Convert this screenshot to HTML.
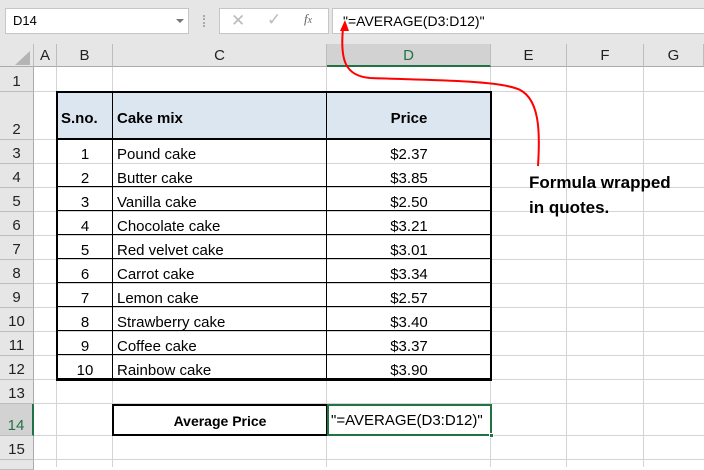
<!DOCTYPE html>
<html><head><meta charset="utf-8"><style>
*{margin:0;padding:0;box-sizing:border-box}
body{width:704px;height:467px;overflow:hidden;background:#fff;position:relative;font-family:"Liberation Sans",sans-serif;font-size:15px;color:#000}
.a{position:absolute}
.hl{position:absolute;height:1px;background:#d4d4d4}
.vl{position:absolute;width:1px;background:#d4d4d4}
.rh{position:absolute;left:0;width:34px;text-align:center;color:#222;font-size:15px;background:#e6e6e6;border-bottom:1px solid #bdbdbd;border-right:1px solid #ababab;display:flex;align-items:flex-end;justify-content:center;padding-bottom:1px}
.ch{position:absolute;top:44px;height:23px;text-align:center;line-height:23px;background:#e6e6e6;border-right:1px solid #bdbdbd;border-bottom:1px solid #ababab;color:#222;font-size:15px}
.c{position:absolute;height:24px;line-height:24px;font-size:15px;white-space:nowrap}
</style></head><body>
<div class="a" style="left:0;top:0;width:704px;height:44px;background:#e6e6e6"></div>
<div class="a" style="left:5px;top:8px;width:184px;height:26px;background:#fff;border:1px solid #c6c6c6;font-size:13px;line-height:24px;padding-left:7px">D14</div>
<div class="a" style="left:176px;top:19px;width:0;height:0;border-left:4px solid transparent;border-right:4px solid transparent;border-top:4px solid #777"></div>
<div class="a" style="left:203px;top:15px;width:2px;height:12px;border-left:2px dotted #aaa"></div>
<div class="a" style="left:219px;top:8px;width:110px;height:26px;background:#fff;border:1px solid #c6c6c6"></div>
<div class="a" style="left:231px;top:11px;color:#bbb;font-size:17px">✕</div>
<div class="a" style="left:267px;top:10px;color:#bbb;font-size:17px">✓</div>
<div class="a" style="left:304px;top:11px;color:#666;font-size:13px;font-style:italic;font-family:'Liberation Serif',serif">f<span style="font-size:10px">x</span></div>
<div class="a" style="left:332px;top:8px;width:380px;height:26px;background:#fff;border:1px solid #c6c6c6;font-size:14px;line-height:24px;padding-left:10px">"=AVERAGE(D3:D12)"</div>

<div class="ch" style="left:0;width:34px"></div>
<div class="a" style="left:15px;top:51px;width:0;height:0;border-left:15px solid transparent;border-bottom:14px solid #b4b4b4"></div>
<div class="ch" style="left:34px;width:23px">A</div>
<div class="ch" style="left:57px;width:56px">B</div>
<div class="ch" style="left:113px;width:214px">C</div>
<div class="ch" style="left:327px;width:164px;background:#d2d2d2;color:#217346;border-bottom:2px solid #217346">D</div>
<div class="ch" style="left:491px;width:76px">E</div>
<div class="ch" style="left:567px;width:77px">F</div>
<div class="ch" style="left:644px;width:60px">G</div>

<div class="rh" style="top:67px;height:25px">1</div>
<div class="rh" style="top:92px;height:48px">2</div>
<div class="rh" style="top:140px;height:24px">3</div>
<div class="rh" style="top:164px;height:24px">4</div>
<div class="rh" style="top:188px;height:24px">5</div>
<div class="rh" style="top:212px;height:24px">6</div>
<div class="rh" style="top:236px;height:24px">7</div>
<div class="rh" style="top:260px;height:24px">8</div>
<div class="rh" style="top:284px;height:24px">9</div>
<div class="rh" style="top:308px;height:24px">10</div>
<div class="rh" style="top:332px;height:24px">11</div>
<div class="rh" style="top:356px;height:24px">12</div>
<div class="rh" style="top:380px;height:24px">13</div>
<div class="rh" style="top:404px;height:32px;background:#d2d2d2;color:#217346;border-right:2px solid #217346">14</div>
<div class="rh" style="top:436px;height:24px">15</div>
<div class="rh" style="top:460px;height:10px"></div>

<div class="hl" style="left:34px;top:91px;width:670px"></div>
<div class="hl" style="left:34px;top:139px;width:670px"></div>
<div class="hl" style="left:34px;top:163px;width:670px"></div>
<div class="hl" style="left:34px;top:187px;width:670px"></div>
<div class="hl" style="left:34px;top:211px;width:670px"></div>
<div class="hl" style="left:34px;top:235px;width:670px"></div>
<div class="hl" style="left:34px;top:259px;width:670px"></div>
<div class="hl" style="left:34px;top:283px;width:670px"></div>
<div class="hl" style="left:34px;top:307px;width:670px"></div>
<div class="hl" style="left:34px;top:331px;width:670px"></div>
<div class="hl" style="left:34px;top:355px;width:670px"></div>
<div class="hl" style="left:34px;top:379px;width:670px"></div>
<div class="hl" style="left:34px;top:403px;width:670px"></div>
<div class="hl" style="left:34px;top:435px;width:670px"></div>
<div class="hl" style="left:34px;top:459px;width:670px"></div>
<div class="vl" style="left:56px;top:67px;height:400px"></div>
<div class="vl" style="left:112px;top:67px;height:400px"></div>
<div class="vl" style="left:326px;top:67px;height:400px"></div>
<div class="vl" style="left:490px;top:67px;height:400px"></div>
<div class="vl" style="left:566px;top:67px;height:400px"></div>
<div class="vl" style="left:643px;top:67px;height:400px"></div>

<div class="a" style="left:57px;top:92px;width:434px;height:48px;background:#dce6f1"></div>
<div class="a" style="left:56px;top:91px;width:436px;height:290px;border:2px solid #000"></div>
<div class="a" style="left:56px;top:138px;width:436px;height:2px;background:#000"></div>
<div class="a" style="left:112px;top:91px;width:1px;height:290px;background:#000"></div>
<div class="a" style="left:326px;top:91px;width:1px;height:290px;background:#000"></div>
<div class="a" style="left:57px;top:163px;width:434px;height:217px;background:repeating-linear-gradient(to bottom,transparent 0,transparent 23px,#000 23px,#000 24px)"></div>
<div class="a" style="left:61px;top:110px;font-weight:bold;font-size:15px">S.no.</div>
<div class="a" style="left:117px;top:110px;font-weight:bold;font-size:15px">Cake mix</div>
<div class="a" style="left:327px;top:110px;width:164px;text-align:center;font-weight:bold;font-size:15px">Price</div>

<div class="c" style="left:57px;top:143px;width:56px;text-align:center">1</div><div class="c" style="left:117px;top:143px">Pound cake</div><div class="c" style="left:327px;top:143px;width:164px;text-align:center">$2.37</div>
<div class="c" style="left:57px;top:167px;width:56px;text-align:center">2</div><div class="c" style="left:117px;top:167px">Butter cake</div><div class="c" style="left:327px;top:167px;width:164px;text-align:center">$3.85</div>
<div class="c" style="left:57px;top:191px;width:56px;text-align:center">3</div><div class="c" style="left:117px;top:191px">Vanilla cake</div><div class="c" style="left:327px;top:191px;width:164px;text-align:center">$2.50</div>
<div class="c" style="left:57px;top:215px;width:56px;text-align:center">4</div><div class="c" style="left:117px;top:215px">Chocolate cake</div><div class="c" style="left:327px;top:215px;width:164px;text-align:center">$3.21</div>
<div class="c" style="left:57px;top:239px;width:56px;text-align:center">5</div><div class="c" style="left:117px;top:239px">Red velvet cake</div><div class="c" style="left:327px;top:239px;width:164px;text-align:center">$3.01</div>
<div class="c" style="left:57px;top:263px;width:56px;text-align:center">6</div><div class="c" style="left:117px;top:263px">Carrot cake</div><div class="c" style="left:327px;top:263px;width:164px;text-align:center">$3.34</div>
<div class="c" style="left:57px;top:287px;width:56px;text-align:center">7</div><div class="c" style="left:117px;top:287px">Lemon cake</div><div class="c" style="left:327px;top:287px;width:164px;text-align:center">$2.57</div>
<div class="c" style="left:57px;top:311px;width:56px;text-align:center">8</div><div class="c" style="left:117px;top:311px">Strawberry cake</div><div class="c" style="left:327px;top:311px;width:164px;text-align:center">$3.40</div>
<div class="c" style="left:57px;top:335px;width:56px;text-align:center">9</div><div class="c" style="left:117px;top:335px">Coffee cake</div><div class="c" style="left:327px;top:335px;width:164px;text-align:center">$3.37</div>
<div class="c" style="left:57px;top:359px;width:56px;text-align:center">10</div><div class="c" style="left:117px;top:359px">Rainbow cake</div><div class="c" style="left:327px;top:359px;width:164px;text-align:center">$3.90</div>

<div class="a" style="left:112px;top:404px;width:216px;height:32px;border:2px solid #000;background:#fff;text-align:center;line-height:30px;font-weight:bold;font-size:14px">Average Price</div>
<div class="a" style="left:327px;top:404px;width:165px;height:32px;border:2px solid #217346;background:#fff;line-height:30px;font-size:15px;padding-left:2px;white-space:nowrap">"=AVERAGE(D3:D12)"</div>
<div class="a" style="left:489px;top:433px;width:5px;height:5px;background:#217346;border:1px solid #fff"></div>

<div class="a" style="left:529px;top:170px;font-weight:bold;font-size:17px;line-height:25px">Formula wrapped<br>in quotes.</div>
<svg class="a" style="left:0;top:0" width="704" height="467">
<path d="M538,166 C540,135 541,95 515,88 C490,80 420,80 370,78 C345,76 340,60 343,28" fill="none" stroke="#f00" stroke-width="2"/>
<path d="M345,20 L340,31 L349,31 Z" fill="#f00"/>
</svg>
</body></html>
